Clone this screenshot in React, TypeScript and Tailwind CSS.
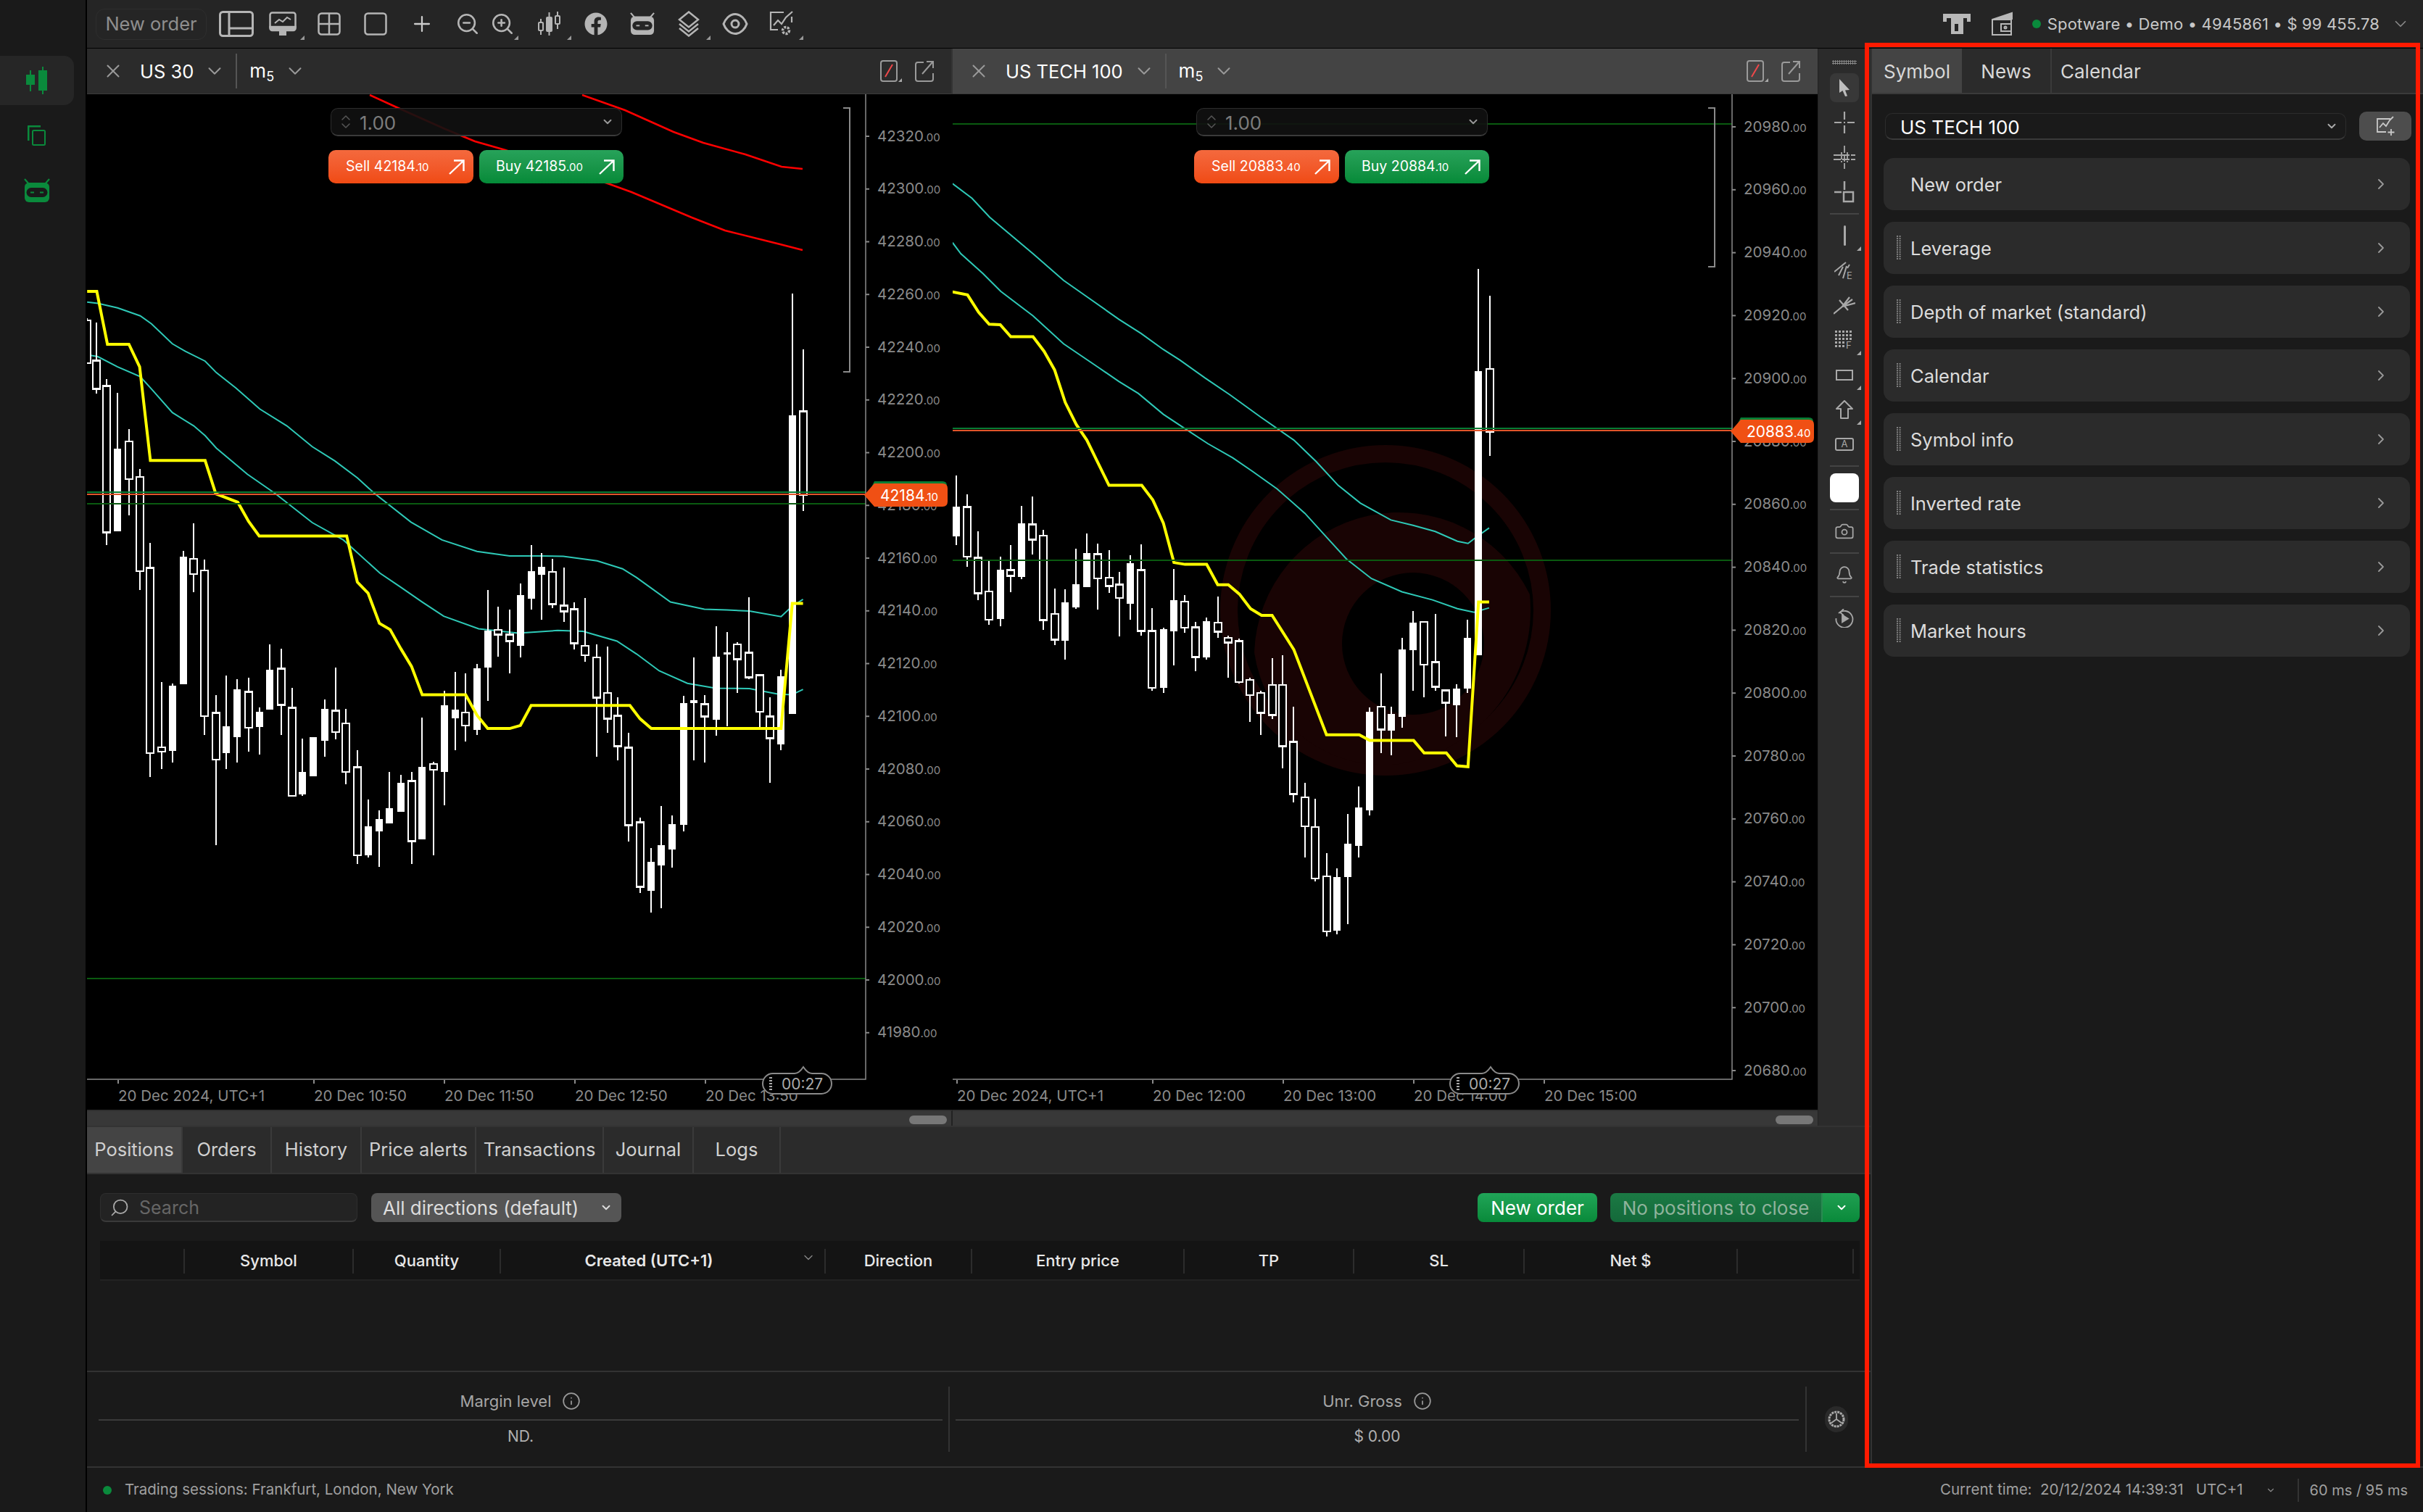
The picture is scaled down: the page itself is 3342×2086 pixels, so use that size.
import type { ReactNode } from 'react';
import { Bell, Camera, ChevronDown, ChevronRight, ChevronsUpDown, Info, Plus, Search, X, ZoomIn, ZoomOut } from 'lucide-react';
import { FaFacebook } from 'react-icons/fa';

type Candle = [number, number, number, number, number, number];
type Pt = [number, number];

// [x, wickTop, bodyTop, bodyBottom, wickBottom, filled] read in crop coordinates
const candlesA: Candle[] = [
  [26, 145, 150, 247, 247, 0],
  [42, 155, 241, 305, 315, 0], [61, 283, 298, 628, 656, 0], [80, 314, 440, 626, 626, 1], [100, 395, 423, 508, 590, 0],
  [119, 485, 503, 715, 758, 0], [138, 652, 708, 1125, 1180, 0], [158, 965, 1112, 1122, 1162, 0], [177, 968, 973, 1120, 1147, 1],
  [196, 670, 683, 970, 970, 1], [215, 608, 688, 722, 762, 0], [234, 690, 714, 1042, 1085, 0], [254, 995, 1035, 1140, 1332, 0],
  [273, 950, 1065, 1126, 1162, 1], [292, 958, 982, 1090, 1146, 1], [312, 955, 987, 1068, 1122, 0], [331, 1022, 1033, 1066, 1128, 1],
  [350, 880, 938, 1028, 1028, 1], [370, 890, 935, 1017, 1085, 0], [389, 978, 1023, 1222, 1222, 0], [408, 1092, 1167, 1218, 1222, 1],
  [427, 1090, 1090, 1178, 1178, 1], [447, 1005, 1025, 1098, 1133, 1], [466, 932, 1030, 1078, 1095, 0], [485, 1026, 1058, 1168, 1195, 0],
  [505, 1118, 1157, 1356, 1376, 0], [524, 1230, 1291, 1355, 1360, 1], [543, 1255, 1274, 1301, 1382, 1], [562, 1168, 1250, 1283, 1283, 1],
  [582, 1175, 1192, 1257, 1258, 1], [601, 1168, 1188, 1324, 1376, 0], [620, 1045, 1156, 1320, 1320, 1], [640, 1145, 1150, 1163, 1356, 0],
  [659, 985, 1018, 1167, 1243, 1], [678, 942, 1028, 1047, 1118, 1], [697, 945, 1034, 1063, 1100, 0], [717, 925, 935, 1073, 1085, 1],
  [736, 758, 850, 933, 1008, 1], [755, 795, 848, 858, 908, 0], [775, 802, 858, 873, 946, 0], [794, 743, 770, 883, 910, 1],
  [813, 657, 715, 778, 802, 1], [832, 675, 705, 723, 825, 1], [851, 688, 717, 790, 798, 0], [871, 708, 793, 806, 830, 0],
  [890, 785, 801, 878, 892, 0], [909, 776, 884, 905, 920, 0], [929, 880, 910, 1000, 1133, 0], [948, 885, 990, 1048, 1080, 0],
  [967, 1000, 1041, 1110, 1142, 0], [986, 1080, 1113, 1288, 1325, 0], [1006, 1270, 1281, 1427, 1440, 0], [1025, 1340, 1370, 1436, 1484, 1],
  [1044, 1245, 1333, 1378, 1475, 1], [1063, 1265, 1285, 1343, 1383, 1], [1083, 996, 1013, 1287, 1302, 1], [1102, 910, 1006, 1013, 1142, 1],
  [1121, 995, 1015, 1043, 1147, 0], [1141, 840, 908, 1050, 1086, 1], [1160, 852, 898, 902, 1065, 1], [1179, 875, 880, 914, 990, 0],
  [1199, 775, 899, 955, 958, 0], [1218, 947, 950, 1032, 1068, 0], [1237, 1000, 1043, 1092, 1193, 0], [1256, 938, 952, 1105, 1118, 1],
  [1276, 90, 364, 1037, 1037, 1], [1295, 216, 355, 543, 580, 0],
];

const candlesB: Candle[] = [
  [12, 500, 570, 637, 657, 1], [32, 542, 571, 683, 705, 0], [51, 626, 685, 765, 780, 0], [71, 692, 761, 825, 836, 0],
  [91, 682, 712, 823, 840, 1], [110, 657, 713, 726, 763, 0], [130, 568, 608, 728, 733, 1], [149, 547, 610, 644, 678, 0],
  [169, 622, 635, 826, 848, 0], [189, 755, 812, 870, 882, 0], [208, 756, 785, 872, 915, 1], [228, 665, 745, 797, 800, 1],
  [247, 630, 675, 752, 752, 1], [267, 653, 677, 732, 802, 0], [287, 668, 730, 749, 765, 0], [306, 717, 746, 776, 862, 0],
  [326, 680, 697, 789, 825, 1], [345, 655, 713, 850, 860, 0], [365, 798, 850, 978, 985, 0], [385, 842, 846, 978, 990, 1],
  [404, 710, 781, 851, 928, 1], [424, 770, 784, 843, 855, 0], [443, 830, 842, 909, 940, 0], [463, 820, 828, 910, 915, 1],
  [483, 772, 831, 852, 865, 0], [502, 860, 866, 876, 955, 0], [522, 868, 873, 965, 968, 0], [541, 955, 960, 995, 1055, 0],
  [561, 985, 990, 1035, 1085, 0], [581, 912, 972, 1040, 1048, 0], [600, 905, 972, 1110, 1160, 0], [620, 1020, 1100, 1218, 1237, 0],
  [640, 1192, 1225, 1290, 1360, 0], [659, 1228, 1292, 1408, 1415, 0], [679, 1350, 1403, 1527, 1538, 0], [698, 1385, 1404, 1525, 1533, 1],
  [718, 1263, 1329, 1405, 1510, 1], [737, 1200, 1248, 1335, 1360, 1], [757, 1022, 1033, 1255, 1265, 1], [777, 945, 1021, 1072, 1125, 0],
  [796, 1020, 1037, 1074, 1130, 1], [816, 866, 892, 1043, 1068, 1], [835, 805, 832, 893, 985, 1], [855, 830, 830, 926, 1000, 0],
  [875, 812, 920, 976, 985, 0], [894, 982, 984, 1012, 1088, 0], [914, 970, 980, 1018, 1090, 1], [933, 825, 865, 980, 990, 1],
  [953, 35, 265, 905, 905, 1], [973, 95, 260, 402, 455, 0],
];

const yellowA: Pt[] = [[26, 85], [43, 85], [62, 204], [100, 204], [119, 255], [138, 466], [235, 466], [254, 541], [293, 560], [312, 603], [331, 636], [486, 636], [505, 740], [524, 765], [544, 833], [563, 847], [582, 890], [601, 930], [620, 994], [697, 994], [717, 1040], [736, 1070], [775, 1070], [794, 1063], [813, 1018], [988, 1018], [1006, 1048], [1026, 1070], [1256, 1070], [1276, 788], [1295, 788]];
const tealA1: Pt[] = [[26, 109], [45, 112], [80, 122], [120, 140], [140, 158], [177, 203], [200, 220], [235, 242], [255, 268], [290, 303], [332, 350], [380, 388], [425, 435], [465, 467], [505, 505], [535, 540], [600, 605], [655, 645], [717, 671], [775, 681], [830, 681], [870, 682], [930, 692], [975, 710], [1000, 730], [1060, 785], [1120, 801], [1160, 803], [1200, 805], [1256, 818], [1275, 795], [1295, 779]];
const tealA2: Pt[] = [[26, 228], [45, 232], [80, 255], [120, 277], [140, 305], [177, 358], [215, 388], [235, 410], [255, 438], [310, 497], [360, 541], [425, 606], [480, 645], [545, 720], [580, 750], [620, 785], [658, 817], [720, 845], [790, 855], [860, 849], [905, 851], [965, 873], [1000, 902], [1040, 940], [1090, 968], [1140, 979], [1200, 980], [1250, 992], [1275, 994], [1295, 982]];

const yellowB: Pt[] = [[5, 86], [32, 93], [52, 132], [71, 159], [91, 160], [110, 187], [150, 187], [170, 220], [189, 262], [208, 335], [228, 385], [247, 420], [287, 522], [346, 522], [366, 555], [385, 607], [404, 696], [424, 700], [463, 700], [483, 746], [502, 746], [522, 767], [542, 800], [562, 815], [581, 815], [620, 892], [679, 1084], [738, 1084], [757, 1097], [836, 1097], [855, 1125], [895, 1125], [914, 1154], [934, 1156], [953, 785], [972, 785]];
const tealB1: Pt[] = [[5, -158], [40, -125], [72, -82], [150, 0], [205, 60], [245, 95], [305, 148], [345, 180], [385, 216], [415, 240], [460, 280], [505, 318], [560, 368], [620, 420], [660, 468], [700, 522], [740, 562], [795, 600], [835, 612], [875, 626], [915, 648], [934, 653], [953, 635], [972, 618]];
const tealB2: Pt[] = [[5, -25], [20, 0], [60, 45], [92, 85], [150, 140], [205, 203], [270, 258], [305, 288], [340, 315], [385, 362], [425, 395], [465, 428], [510, 460], [545, 490], [590, 530], [640, 585], [680, 640], [715, 688], [760, 732], [815, 762], [870, 780], [915, 800], [945, 808], [972, 798]];

const redA1: Pt[] = [[803, 131], [862, 152], [929, 182], [970, 197], [1028, 213], [1078, 230], [1107, 233]];
const redA2: Pt[] = [[510, 131], [547, 148], [614, 178], [655, 195], [697, 207], [838, 253], [871, 265], [954, 300], [1000, 318], [1076, 337], [1107, 345]];

const toA = (p: Pt): Pt => [100 + p[0] / 1.2852, 350 + p[1] / 1.6333];
const toB = (p: Pt): Pt => [1310 + p[0] / 1.3067, 350 + p[1] / 1.6333];
const line = (pts: Pt[]) => pts.map((p) => `${p[0].toFixed(1)},${p[1].toFixed(1)}`).join(' ');

function Candles({ data, map }: { data: Candle[]; map: (p: Pt) => Pt }) {
  return (
    <g shapeRendering="crispEdges">
      {data.map((c) => {
        const [x, top] = map([c[0], c[1]]);
        const [, bt] = map([c[0], c[2]]);
        const [, bb] = map([c[0], c[3]]);
        const [, low] = map([c[0], c[4]]);
        const cx = Math.round(x);
        return (
          <g key={c[0]}>
            <rect x={cx - 1} y={top} width={2} height={low - top} fill="#fff" />
            <rect
              x={cx - 5}
              y={bt}
              width={10}
              height={Math.max(bb - bt, 3)}
              fill={c[5] ? '#fff' : '#000'}
              stroke="#fff"
              strokeWidth={c[5] ? 0 : 2.5}
            />
          </g>
        );
      })}
    </g>
  );
}

interface PriceTagProps {
  x: number;
  y: number;
  price: string;
  cents: string;
}

function PriceTag({ x, y, price, cents }: PriceTagProps) {
  return (
    <g>
      <path d={`M${x + 14} ${y - 3} H${x + 108} q6 0 6 6 v6 H${x + 8} Z`} fill="#0a7d35" />
      <path d={`M${x} ${y + 16} L${x + 14} ${y} H${x + 108} q7 0 7 7 V${y + 25} q0 7 -7 7 H${x + 14} Z`} fill="#f05014" />
      <text x={x + 22} y={y + 24} className="fill-white text-[21px]">
        {price}
        <tspan className="text-[15px]">{cents}</tspan>
      </text>
    </g>
  );
}

function Timer({ x }: { x: number }) {
  return (
    <g>
      <path
        d={`M${x + 14} 1481 H${x + 44} Q${x + 50} 1481 ${x + 56} 1472 Q${x + 62} 1481 ${x + 68} 1481 H${x + 81} a14 14 0 0 1 14 14 a14 14 0 0 1 -14 14 H${x + 14} a14 14 0 0 1 -14 -14 a14 14 0 0 1 14 -14 Z`}
        fill="#000"
        stroke="#8a8a8a"
        strokeWidth={2}
      />
      <line x1={x + 11} y1={1486} x2={x + 11} y2={1504} stroke="#aaa" strokeWidth={4} strokeDasharray="2 2" />
      <text x={x + 26} y={1503} className="fill-[#aaa] text-[21px]">
        00:27
      </text>
    </g>
  );
}

function CandleGlyph({ className }: { className?: string }) {
  return (
    <svg viewBox="0 0 30 38" className={className} fill="currentColor">
      <rect x="0" y="11" width="12" height="14" />
      <rect x="5" y="5" width="2" height="29" />
      <rect x="17" y="5" width="12" height="28" />
      <rect x="22" y="0" width="2" height="38" />
    </svg>
  );
}

function RobotGlyph({ className, face }: { className?: string; face: string }) {
  return (
    <svg viewBox="0 0 36 34" className={className}>
      <path d="M1 1l6 7M35 1l-6 7" stroke="currentColor" strokeWidth="2.2" fill="none" />
      <rect x="1" y="6" width="34" height="27" rx="6" fill="currentColor" />
      <rect x="3.5" y="13" width="29" height="13" rx="6.5" fill={face} />
      <rect x="9" y="18.5" width="5" height="2" fill="currentColor" />
      <rect x="22" y="18.5" width="5" height="2" fill="currentColor" />
    </svg>
  );
}

function TradeArrow() {
  return (
    <svg width="23" height="21" viewBox="0 0 23 21" fill="none" stroke="#fff" strokeWidth="2.4">
      <path d="M1 20L20 2M7 1.500h13.500V16" />
    </svg>
  );
}

function TopIcon({ children, corner, className = 'w-[64px]' }: { children: ReactNode; corner?: boolean; className?: string }) {
  return (
    <div className={`relative h-[66px] flex items-center justify-center text-[#b5b5b5] ${className}`}>
      {children}
      {corner && (
        <span className="absolute right-[2px] bottom-[11px] w-0 h-0 border-l-[6px] border-l-transparent border-b-[6px] border-b-[#999]" />
      )}
    </div>
  );
}

function ToolCell({ children, corner }: { children: ReactNode; corner?: boolean }) {
  return (
    <div className="relative w-[72px] h-[48px] flex items-center justify-center text-[#a8a8a8]">
      {children}
      {corner && (
        <span className="absolute right-[13px] bottom-[3px] w-0 h-0 border-l-[6px] border-l-transparent border-b-[6px] border-b-[#aaa]" />
      )}
    </div>
  );
}

function ToolSep() {
  return <div className="w-[40px] h-[2px] my-[5px] bg-[#444]" />;
}

function Grip() {
  const rows = Array.from({ length: 11 }, (_, i) => i);
  return (
    <svg width="6" height="34" viewBox="0 0 6 34" className="shrink-0" fill="#808080">
      {rows.map((i) => (
        <g key={i}>
          <rect x="0" y={i * 3.1} width="2" height="2" />
          <rect x="3.600" y={i * 3.1} width="2" height="2" />
        </g>
      ))}
    </svg>
  );
}

function PanelRow({ label, grip = true }: { label: string; grip?: boolean }) {
  return (
    <div className="h-[72px] w-[726px] rounded-[14px] bg-[#2b2b2b] flex items-center pr-[28px]">
      <div className="w-[37px] pl-[18px] shrink-0">{grip && <Grip />}</div>
      <span className="flex-1 pt-[2px] text-[25.5px] text-[#dcdcdc]">{label}</span>
      <ChevronRight className="w-[24px] h-[24px] text-[#999]" strokeWidth={1.8} />
    </div>
  );
}

interface ChartProps {
  left: number;
  width: number;
  axisX: number;
  symbol: string;
  active?: boolean;
  sell: string[];
  buy: string[];
  labels: string[];
  firstY: number;
  stepY: number;
  times: [string, number][];
  timerX: number;
  bracket: [number, number];
  tag: { y: number; price: string; cents: string };
  hlines: { y: number; color: string; w: number }[];
  children: ReactNode;
}

function Chart(props: ChartProps) {
  const { left, width, axisX, symbol, active, sell, buy, labels, firstY, stepY, times, timerX, bracket, tag, hlines, children } = props;
  return (
    <div className="flex flex-col h-full" style={{ width }}>
      <div className={`h-[63px] flex items-center border-b border-[#3a3a3a] ${active ? 'bg-[#444444]' : 'bg-[#2b2b2b] border-r-2 border-r-[#333]'}`}>
        <X className="w-[30px] h-[30px] text-[#9a9a9a] shrink-0 ml-[21px]" strokeWidth={1.6} />
        <span className="pt-[2px] text-[25.5px] text-white ml-[22px]">{symbol}</span>
        <ChevronDown className="w-[30px] h-[30px] text-[#999] ml-[14px]" strokeWidth={1.6} />
        <div className="w-[2px] h-[48px] bg-[#555] ml-[14px]" />
        <span className="text-[26px] text-white ml-[17px] leading-none">
          m<sub className="text-[18px]">5</sub>
        </span>
        <ChevronDown className="w-[30px] h-[30px] text-[#999] ml-[14px]" strokeWidth={1.6} />
        <div className="flex-1" />
        <div className="relative mr-[24px]">
          <svg width="24" height="30" viewBox="0 0 24 30">
            <rect x="1" y="1" width="22" height="28" rx="3" fill="none" stroke="#9a9a9a" strokeWidth="2" />
            <path d="M7 23L17 6" stroke="#f0484a" strokeWidth="2" />
          </svg>
          <span className="absolute -right-[6px] bottom-0 w-0 h-0 border-l-[5px] border-l-transparent border-b-[5px] border-b-[#aaa]" />
        </div>
        <svg width="26" height="30" viewBox="0 0 26 30" className="mr-[24px]" fill="none" stroke="#9a9a9a" strokeWidth="2">
          <path d="M12 3H4a3 3 0 0 0-3 3v20a3 3 0 0 0 3 3h18a3 3 0 0 0 3-3v-8" />
          <path d="M10 19L24 3M16 2h9v9" />
        </svg>
      </div>
      <div className="relative h-[1401px] bg-black">
        <svg viewBox={`${left} 130 ${width} 1401`} className="absolute inset-0 w-full h-full">
          {children}
          {hlines.map((h) => (
            <rect key={h.y} x={left} y={h.y} width={axisX - left} height={h.w} fill={h.color} shapeRendering="crispEdges" />
          ))}
          <path d={`M${axisX} 130V1489H${left}`} fill="none" stroke="#8a8a8a" strokeWidth={1.5} />
          <path d={`M${bracket[0]} ${149}H${bracket[0] + 9}V${bracket[1]}H${bracket[0]}`} fill="none" stroke="#8a8a8a" strokeWidth={2} />
          {labels.map((v, i) => {
            const y = firstY + stepY * i;
            return (
              <g key={v}>
                <line x1={axisX} x2={axisX + 5} y1={y} y2={y} stroke="#8a8a8a" strokeWidth={2} />
                <text x={axisX + 16} y={y + 6.5} className="fill-[#8a8a8a] text-[20.5px]">
                  {v}
                  <tspan className="text-[15px]">.00</tspan>
                </text>
              </g>
            );
          })}
          {times.map(([t, x]) => (
            <g key={t}>
              <line x1={x} x2={x} y1={1490} y2={1495} stroke="#8a8a8a" strokeWidth={2} />
              <text x={x} y={1519} className="fill-[#8a8a8a] text-[20.5px]">
                {t}
              </text>
            </g>
          ))}
          <PriceTag x={axisX - 2} y={tag.y} price={tag.price} cents={tag.cents} />
          <Timer x={timerX} />
        </svg>
        <div className="absolute left-[333px] top-[19px] w-[407px] flex flex-col gap-[19px]">
          <div className="ml-[3px] w-[402px] h-[39px] rounded-[10px] bg-[#111111]/90 border border-[#2c2c2c] border-b-2 border-b-[#3a3a3a] flex items-center pl-[8px] pr-[10px]">
            <ChevronsUpDown className="w-[24px] h-[26px] text-[#555]" strokeWidth={1.5} />
            <span className="ml-[7px] pt-[3px] text-[26px] text-[#7c7c7c] flex-1">1.00</span>
            <ChevronDown className="w-[18px] h-[18px] text-[#999]" strokeWidth={2.5} />
          </div>
          <div className="flex gap-[8px]">
            <div className="w-[200px] h-[46px] rounded-[10px] bg-gradient-to-b from-[#f4693d] to-[#f04a12] flex items-center justify-between pl-[24px] pr-[11px] text-white">
              <span className="text-[19.5px]">
                {sell[0]}
                <span className="text-[15px]">{sell[1]}</span>
              </span>
              <TradeArrow />
            </div>
            <div className="w-[199px] h-[46px] rounded-[10px] bg-gradient-to-b from-[#27a25a] to-[#048a38] flex items-center justify-between pl-[23px] pr-[11px] text-white">
              <span className="text-[19.5px]">
                {buy[0]}
                <span className="text-[15px]">{buy[1]}</span>
              </span>
              <TradeArrow />
            </div>
          </div>
        </div>
      </div>
      <div className={`h-[22px] bg-[#383838] border-t-2 border-[#2f2f2f] flex items-end justify-end pb-[2px] pr-[6px] ${active ? '' : 'border-r-2 border-r-[#222]'}`}>
        <div className="w-[52px] h-[12px] rounded-full bg-[#777]" />
      </div>
    </div>
  );
}

const tabs: [string, string][] = [
  ['Positions', 'w-[132px] bg-[#444444]'],
  ['Orders', 'w-[123px]'],
  ['History', 'w-[124px]'],
  ['Price alerts', 'w-[158px]'],
  ['Transactions', 'w-[176px]'],
  ['Journal', 'w-[124px]'],
  ['Logs', 'w-[120px] border-r-0'],
];

const columns: [string, string][] = [
  ['', 'w-[117px]'],
  ['Symbol', 'w-[233px]'],
  ['Quantity', 'w-[203px]'],
  ['Created (UTC+1)', 'w-[448px]'],
  ['Direction', 'w-[202px]'],
  ['Entry price', 'w-[293px]'],
  ['TP', 'w-[234px]'],
  ['SL', 'w-[235px]'],
  ['Net $', 'w-[294px]'],
  ['', 'w-[160px]'],
];

function Summary({ label, value, className }: { label: string; value: string; className: string }) {
  return (
    <div className={`h-[90px] flex flex-col ${className}`}>
      <div className="h-[45px] pb-[5px] flex items-center justify-center gap-[15px] text-[22px] text-[#a5a5a5]">
        {label}
        <Info className="w-[26px] h-[26px] text-[#999]" strokeWidth={1.6} />
      </div>
      <div className="h-[2px] bg-[#3a3a3a]" />
      <div className="flex-1 flex items-center justify-center text-[21px] text-[#b0b0b0]">{value}</div>
    </div>
  );
}

export default function App() {
  return (
    <div className="relative w-[3342px] h-[2086px] flex overflow-hidden bg-[#1a1a1a] [font-family:Inter,sans-serif]">
      <aside className="w-[120px] shrink-0 pt-[77px] border-r-2 border-black flex flex-col gap-[8px] text-[#0a8a3c]">
        <div className="w-[102px] h-[68px] rounded-r-[14px] bg-[#262626] flex items-center justify-center">
          <CandleGlyph className="w-[30px] h-[38px]" />
        </div>
        <div className="w-[102px] h-[68px] flex items-center justify-center">
          <svg width="26" height="28" viewBox="0 0 26 28" fill="none" stroke="currentColor" strokeWidth="2">
            <path d="M1 21V2.5A1.5 1.5 0 0 1 2.500 1H18" strokeWidth="3" />
            <rect x="7" y="7" width="17" height="20" rx="1.500" />
          </svg>
        </div>
        <div className="w-[102px] h-[68px] flex items-center justify-center">
          <RobotGlyph className="w-[36px] h-[34px]" face="#1a1a1a" />
        </div>
      </aside>

      <div className="flex-1 flex flex-col min-w-0">
        <header className="h-[67px] shrink-0 bg-[#252525] border-b border-black flex items-center pl-[12px] pr-[18px]">
          <div className="w-[153px] h-[43px] rounded-[12px] border border-[#2e2e2e] flex items-center justify-center text-[25.5px] text-[#8e8e8e]">
            New order
          </div>
          <div className="flex ml-[9px]">
            <TopIcon>
              <svg width="48" height="36" viewBox="0 0 48 36" fill="none" stroke="currentColor" strokeWidth="3">
                <rect x="1.500" y="1.500" width="45" height="33" rx="4" />
                <path d="M14 2v32M14 24h32" />
              </svg>
            </TopIcon>
            <TopIcon corner>
              <svg width="38" height="34" viewBox="0 0 38 34" fill="none" stroke="currentColor" strokeWidth="2.500">
                <rect x="1.500" y="1.500" width="35" height="23" rx="3" />
                <path d="M1.500 21h35v2a3 3 0 0 1-3 3h-29a3 3 0 0 1-3-3z" fill="currentColor" />
                <path d="M8 16l6-5 5 3 6-6 5 3" strokeWidth="2" />
                <path d="M14 33h10v-7H14z" fill="currentColor" stroke="none" />
              </svg>
            </TopIcon>
            <TopIcon>
              <svg width="32" height="32" viewBox="0 0 32 32" fill="none" stroke="currentColor" strokeWidth="2.500">
                <rect x="1.500" y="1.500" width="29" height="29" rx="4" />
                <path d="M16 2v28M2 16h28" />
              </svg>
            </TopIcon>
            <TopIcon>
              <svg width="32" height="32" viewBox="0 0 32 32" fill="none" stroke="currentColor" strokeWidth="2.500">
                <rect x="1.500" y="1.500" width="29" height="29" rx="4" />
              </svg>
            </TopIcon>
            <TopIcon>
              <Plus className="w-[34px] h-[34px] text-[#ccc]" strokeWidth={1.6} />
            </TopIcon>
            <TopIcon className="w-[48px] ml-[7px]">
              <ZoomOut className="w-[34px] h-[34px]" strokeWidth={1.8} />
            </TopIcon>
            <TopIcon className="w-[48px]" corner>
              <ZoomIn className="w-[34px] h-[34px]" strokeWidth={1.8} />
            </TopIcon>
            <TopIcon className="w-[64px] ml-[9px]" corner>
              <svg width="32" height="34" viewBox="0 0 32 34" fill="none" stroke="currentColor" strokeWidth="2">
                <rect x="1" y="15" width="6" height="11" rx="1" />
                <path d="M4 10v5M4 26v6" />
                <rect x="12" y="8" width="7" height="19" rx="1" fill="currentColor" />
                <path d="M15.500 1v7M15.500 27v6" />
                <rect x="24" y="6" width="6" height="11" rx="1" />
                <path d="M27 0v6M27 17v7" />
              </svg>
            </TopIcon>
            <TopIcon>
              <FaFacebook className="w-[32px] h-[38px]" />
            </TopIcon>
            <TopIcon>
              <RobotGlyph className="w-[34px] h-[34px]" face="#252525" />
            </TopIcon>
            <TopIcon corner>
              <svg width="32" height="36" viewBox="0 0 32 36" fill="none" stroke="currentColor" strokeWidth="2.500">
                <path d="M16 1.500L29 12 16 22.500 3 12z" />
                <path d="M3 18l13 10.500L29 18M3 24l13 10.500L29 24" />
              </svg>
            </TopIcon>
            <TopIcon>
              <svg width="36" height="30" viewBox="0 0 36 30" fill="none" stroke="currentColor" strokeWidth="3">
                <path d="M18 1.500C26 1.500 32 9 34 15c-2 6-8 13.500-16 13.500S4 21 2 15C4 9 10 1.500 18 1.500z" />
                <circle cx="18" cy="15" r="5" />
              </svg>
            </TopIcon>
            <TopIcon corner>
              <svg width="34" height="36" viewBox="0 0 34 36" fill="none" stroke="currentColor" strokeWidth="2.200">
                <path d="M20 2H2v24h10" />
                <path d="M6 20l6-7 5 5 6-9 9-8" />
                <circle cx="23" cy="27" r="4.500" strokeWidth="3.500" strokeDasharray="3 1.500" />
                <path d="M31 8v8" />
              </svg>
            </TopIcon>
          </div>
          <div className="flex-1" />
          <svg width="40" height="28" viewBox="0 0 40 28" fill="#b8b8b8" className="mr-[26px]">
            <path d="M1 0h38v11h-5V6h-5v22H12V6H6v5H1z" />
            <rect x="17" y="14" width="5" height="10" fill="#252525" />
          </svg>
          <svg width="34" height="34" viewBox="0 0 34 34" fill="none" stroke="#b8b8b8" strokeWidth="2" className="mr-[24px]">
            <path d="M3 11h26v21H3z" />
            <path d="M3 11L30 2v9" fill="#b8b8b8" />
            <rect x="15" y="17" width="14" height="10" />
            <circle cx="21" cy="22" r="1.500" />
          </svg>
          <span className="w-[12px] h-[12px] rounded-full bg-[#0a8a3c]" />
          <span className="ml-[9px] text-[22px] tracking-[0.15px] text-[#c8c8c8]">Spotware • Demo • 4945861 • $ 99 455.78</span>
          <ChevronDown className="w-[26px] h-[26px] text-[#888] ml-[16px]" strokeWidth={1.6} />
        </header>

        <div className="flex-1 flex min-h-0">
          <div className="w-[2460px] shrink-0 flex flex-col">
            <div className="h-[1486px] flex shrink-0">
              <Chart
                left={120}
                width={1194}
                axisX={1194}
                symbol="US 30"
                sell={['Sell 42184', '.10']}
                buy={['Buy 42185', '.00']}
                labels={['42320', '42300', '42280', '42260', '42240', '42220', '42200', '42180', '42160', '42140', '42120', '42100', '42080', '42060', '42040', '42020', '42000', '41980']}
                firstY={188}
                stepY={72.75}
                times={[['20 Dec 2024, UTC+1', 163], ['20 Dec 10:50', 433], ['20 Dec 11:50', 613], ['20 Dec 12:50', 793], ['20 Dec 13:50', 973]]}
                timerX={1052}
                bracket={[1163, 513]}
                tag={{ y: 667, price: '42184', cents: '.10' }}
                hlines={[
                  { y: 678, color: '#0a7d35', w: 2 },
                  { y: 681, color: '#e0552a', w: 2 },
                  { y: 694, color: '#0a5a10', w: 2 },
                  { y: 1349, color: '#0a5a10', w: 2 },
                ]}
              >
                <polyline points={line(redA1)} fill="none" stroke="#ff0000" strokeWidth={2.500} />
                <polyline points={line(redA2)} fill="none" stroke="#ff0000" strokeWidth={2.500} />
                <polyline points={line(tealA1.map(toA))} fill="none" stroke="#2ec9b7" strokeWidth={2} />
                <polyline points={line(tealA2.map(toA))} fill="none" stroke="#2ec9b7" strokeWidth={2} />
                <Candles data={candlesA} map={toA} />
                <polyline points={line(yellowA.map(toA))} fill="none" stroke="#ffff00" strokeWidth={4} />
              </Chart>
              <Chart
                active
                left={1314}
                width={1193}
                axisX={2389}
                symbol="US TECH 100"
                sell={['Sell 20883', '.40']}
                buy={['Buy 20884', '.10']}
                labels={['20980', '20960', '20940', '20920', '20900', '20880', '20860', '20840', '20820', '20800', '20780', '20760', '20740', '20720', '20700', '20680']}
                firstY={175}
                stepY={86.8}
                times={[['20 Dec 2024, UTC+1', 1320], ['20 Dec 12:00', 1590], ['20 Dec 13:00', 1770], ['20 Dec 14:00', 1950], ['20 Dec 15:00', 2130]]}
                timerX={2000}
                bracket={[2356, 368]}
                tag={{ y: 579, price: '20883', cents: '.40' }}
                hlines={[
                  { y: 170, color: '#0a5a10', w: 2 },
                  { y: 590, color: '#0a7d35', w: 2 },
                  { y: 593, color: '#e0552a', w: 2 },
                  { y: 772, color: '#0a5a10', w: 2 },
                ]}
              >
                <circle cx="1911" cy="842" r="216" fill="none" stroke="#190404" strokeWidth="24" />
                <path d="M1730 900A200 200 0 0 1 2110 820A215 215 0 0 1 1930 1054A180 180 0 0 1 1730 900Z" fill="#190404" />
                <circle cx="1949" cy="888" r="98" fill="#000" />
                <polyline points={line(tealB1.map(toB))} fill="none" stroke="#2ec9b7" strokeWidth={2} />
                <polyline points={line(tealB2.map(toB))} fill="none" stroke="#2ec9b7" strokeWidth={2} />
                <Candles data={candlesB} map={toB} />
                <polyline points={line(yellowB.map(toB))} fill="none" stroke="#ffff00" strokeWidth={4} />
              </Chart>
              <div className="w-[73px] bg-[#2b2b2b] border-l border-[#222] flex flex-col items-center pt-[16px]">
                <div className="w-[34px] h-[6px] bg-[radial-gradient(circle,#888_1px,transparent_1.2px)] bg-[length:3px_3px]" />
                <div className="mt-[12px] w-[40px] h-[40px] rounded-[8px] bg-[#383838] flex items-center justify-center text-[#bdbdbd]">
                  <svg width="16" height="24" viewBox="0 0 16 24" fill="currentColor">
                    <path d="M1 0l14 15-6 .5 3 8-3 .5-3.500-8L1 19z" />
                  </svg>
                </div>
                <div className="h-[4px]" />
                <ToolCell>
                  <svg width="28" height="30" viewBox="0 0 28 30" stroke="currentColor" strokeWidth="2.200">
                    <path d="M14 0v11M14 19v11M0 15h10M18 15h10M13 15h2" />
                  </svg>
                </ToolCell>
                <ToolCell>
                  <svg width="30" height="32" viewBox="0 0 30 32" stroke="currentColor" strokeWidth="1.800">
                    <path d="M15 0v32M0 13h30M0 19h30M11 9v14M19 9v14" strokeDasharray="10 2" />
                  </svg>
                </ToolCell>
                <ToolCell>
                  <svg width="28" height="30" viewBox="0 0 28 30" fill="none" stroke="currentColor" strokeWidth="2.500">
                    <path d="M14 0v12M0 15h10" />
                    <rect x="13" y="15" width="13" height="13" />
                  </svg>
                </ToolCell>
                <ToolSep />
                <ToolCell corner>
                  <div className="w-[3px] h-[28px] bg-[#a8a8a8] rounded-full" />
                </ToolCell>
                <ToolCell>
                  <svg width="28" height="26" viewBox="0 0 28 26" fill="none" stroke="currentColor" strokeWidth="2">
                    <path d="M0 15L16 2M6 20L12 8M12 24l5-17M18 10l3-5" />
                    <text x="17" y="25" className="fill-[#a8a8a8] text-[13px]" stroke="none">
                      E
                    </text>
                  </svg>
                </ToolCell>
                <ToolCell>
                  <svg width="30" height="26" viewBox="0 0 30 26" fill="none" stroke="currentColor" strokeWidth="2.200">
                    <path d="M0 25L12 15M12 15L22 2M12 15L30 10M12 15L26 5M8 6l12 14" />
                  </svg>
                </ToolCell>
                <ToolCell corner>
                  <svg width="26" height="26" viewBox="0 0 26 26" fill="currentColor">
                    {[0, 5, 10, 15, 20].map((x) =>
                      [0, 5, 10, 15, 20].map((y) => (x > 12 && y > 12 ? null : <rect key={`${x}-${y}`} x={x} y={y} width="3" height="3" />)),
                    )}
                    <text x="15" y="25" className="fill-[#a8a8a8] text-[13px]">
                      F
                    </text>
                  </svg>
                </ToolCell>
                <ToolCell corner>
                  <div className="w-[24px] h-[15px] border-2 border-[#a8a8a8]" />
                </ToolCell>
                <ToolCell corner>
                  <svg width="24" height="26" viewBox="0 0 24 26" fill="none" stroke="currentColor" strokeWidth="2">
                    <path d="M12 1L1 12h6v13h10V12h6z" strokeLinejoin="round" />
                  </svg>
                </ToolCell>
                <ToolCell>
                  <div className="relative w-[26px] h-[18px] border-2 border-[#a8a8a8] rounded-[3px] flex items-center justify-center text-[13px] text-[#a8a8a8]">
                    A
                  </div>
                </ToolCell>
                <ToolSep />
                <div className="mt-[4px] w-[40px] h-[40px] rounded-[8px] bg-white" />
                <div className="h-[9px]" />
                <div className="w-[40px] h-[2px] mb-[5px] bg-[#444]" />
                <ToolCell>
                  <Camera className="w-[28px] h-[28px]" strokeWidth={1.5} />
                </ToolCell>
                <ToolSep />
                <ToolCell>
                  <Bell className="w-[26px] h-[26px]" strokeWidth={1.6} />
                </ToolCell>
                <ToolSep />
                <ToolCell>
                  <svg width="26" height="26" viewBox="0 0 26 26" fill="none" stroke="currentColor" strokeWidth="1.800">
                    <path d="M5 6a11.500 11.500 0 1 1-3.500 7" />
                    <path d="M12 0L7 5l5 4" />
                    <path d="M10 8.500l8 5-8 5z" fill="currentColor" />
                  </svg>
                </ToolCell>
              </div>
            </div>

            <section className="h-[470px] flex flex-col">
              <div className="h-[67px] shrink-0 bg-[#2b2b2b] border-y-2 border-[#333] flex">
                {tabs.map(([name, cls]) => (
                  <div key={name} className={`flex items-center justify-center border-r-2 border-[#3a3a3a] text-[25.5px] text-[#d0d0d0] ${cls}`}>
                    {name}
                  </div>
                ))}
              </div>
              <div className="mt-[26px] flex items-center pl-[18px] pr-[15px]">
                <div className="w-[355px] h-[40px] rounded-[8px] border border-[#2e2e2e] border-b-2 border-b-[#3a3a3a] bg-[#232323] flex items-center pl-[12px] gap-[13px]">
                  <Search className="w-[28px] h-[28px] text-[#aaa] -scale-x-100" strokeWidth={1.5} />
                  <span className="pt-[2px] text-[25px] text-[#666]">Search</span>
                </div>
                <div className="ml-[19px] w-[345px] h-[40px] rounded-[8px] bg-[#555555] flex items-center pl-[16px] pr-[12px] justify-between">
                  <span className="text-[26px] text-[#ddd]">All directions (default)</span>
                  <ChevronDown className="w-[18px] h-[18px] text-[#ddd]" strokeWidth={2.500} />
                </div>
                <div className="flex-1" />
                <div className="w-[165px] h-[40px] rounded-[8px] bg-gradient-to-b from-[#20a558] to-[#088a3a] flex items-center justify-center text-[26px] text-white">
                  New order
                </div>
                <div className="ml-[18px] w-[344px] h-[40px] rounded-[8px] overflow-hidden flex">
                  <div className="flex-1 bg-gradient-to-b from-[#1b7a44] to-[#14693a] flex items-center justify-center text-[26px] text-[#8fb39c]">
                    No positions to close
                  </div>
                  <div className="w-[53px] border-l-2 border-[#2a8a52] bg-gradient-to-b from-[#1f9f52] to-[#088a3a] flex items-center justify-center">
                    <ChevronDown className="w-[18px] h-[18px] text-white" strokeWidth={2.500} />
                  </div>
                </div>
              </div>
              <div className="mt-[26px] ml-[18px] w-[2427px] h-[55px] bg-[#141414] border-b-2 border-[#222] flex items-center pt-[2px]">
                {columns.map(([name, cls], i) => (
                  <div
                    key={`${name}-${i}`}
                    className={`relative h-[34px] flex items-center justify-center border-r-2 border-[#2c2c2c] text-[22px] font-medium text-[#e8e8e8] ${cls}`}
                  >
                    {name === 'Created (UTC+1)' ? (
                      <>
                        <span className="pr-[38px] font-semibold">{name}</span>
                        <ChevronDown className="absolute right-[12px] top-[2px] w-[20px] h-[20px] text-[#888]" strokeWidth={1.6} />
                      </>
                    ) : (
                      name
                    )}
                  </div>
                ))}
              </div>
              <div className="flex-1" />
              <div className="h-[132px] shrink-0 border-t-2 border-[#333] flex items-center pl-[16px]">
                <Summary label="Margin level" value="ND." className="w-[1164px]" />
                <div className="w-[2px] h-[90px] bg-[#333] ml-[8px]" />
                <Summary label="Unr. Gross" value="$ 0.00" className="w-[1163px] ml-[8px]" />
                <div className="w-[2px] h-[90px] bg-[#333] ml-[9px]" />
                <div className="ml-[25px] w-[32px] h-[36px] rounded-full bg-[#2a2a2a] flex items-center justify-center">
                  <svg width="26" height="26" viewBox="0 0 26 26" fill="none" stroke="#aaa" strokeWidth="1.800">
                    <circle cx="13" cy="13" r="10" strokeDasharray="3 1" strokeWidth="3" />
                    <path d="M13 13V5M13 13l-7 5M13 13l7 5" />
                  </svg>
                </div>
              </div>
            </section>
          </div>

          <aside className="w-[762px] shrink-0 border-l-2 border-[#333] flex flex-col">
            <div className="h-[63px] bg-[#2b2b2b] border-b-2 border-[#3a3a3a] flex text-[26px] text-[#d8d8d8]">
              <div className="w-[124px] pt-[2px] bg-[#444444] flex items-center justify-center">Symbol</div>
              <div className="w-[124px] pt-[2px] border-r-2 border-[#3a3a3a] flex items-center justify-center">News</div>
              <div className="ml-[12px] pt-[2px] flex items-center">Calendar</div>
            </div>
            <div className="pt-[24px] pl-[18px] flex items-center gap-[18px]">
              <div className="w-[636px] h-[37px] rounded-[10px] border border-[#2c2c2c] border-b-2 border-b-[#3a3a3a] flex items-center justify-between pl-[20px] pr-[10px]">
                <span className="pt-[3px] text-[26px] text-white">US TECH 100</span>
                <ChevronDown className="w-[18px] h-[18px] text-[#aaa]" strokeWidth={2.500} />
              </div>
              <div className="w-[72px] h-[40px] rounded-[10px] bg-[#4d4d4d] flex items-center justify-center">
                <svg width="26" height="28" viewBox="0 0 26 28" fill="none" stroke="#c8c8c8" strokeWidth="1.800">
                  <path d="M20 4H2v18h12" />
                  <path d="M5 16l5-6 4 4 5-8 5-5" />
                  <path d="M21 18v9M16.500 22.500h9" />
                </svg>
              </div>
            </div>
            <div className="mt-[24px] ml-[16px] flex flex-col gap-[16px]">
              <PanelRow label="New order" grip={false} />
              <PanelRow label="Leverage" />
              <PanelRow label="Depth of market (standard)" />
              <PanelRow label="Calendar" />
              <PanelRow label="Symbol info" />
              <PanelRow label="Inverted rate" />
              <PanelRow label="Trade statistics" />
              <PanelRow label="Market hours" />
            </div>
          </aside>
        </div>

        <footer className="h-[63px] shrink-0 border-t-2 border-[#333] flex items-center pl-[22px] pr-[21px] text-[20.5px] text-[#a0a0a0]">
          <span className="w-[12px] h-[12px] rounded-full bg-[#0a8a3c]" />
          <span className="ml-[18px]">Trading sessions: Frankfurt, London, New York</span>
          <div className="flex-1" />
          <span className="whitespace-pre">Current time:  20/12/2024 14:39:31   UTC+1</span>
          <ChevronDown className="ml-[31px] w-[14px] h-[14px] text-[#888]" strokeWidth={2} />
          <div className="ml-[30px] w-[2px] h-[32px] bg-[#333]" />
          <span className="ml-[15px] text-[20px]">60 ms / 95 ms</span>
        </footer>
      </div>

      <div className="absolute left-[2572px] top-[59px] w-[766px] h-[1966px] border-[6px] border-[#ff1a00] pointer-events-none" />
    </div>
  );
}
